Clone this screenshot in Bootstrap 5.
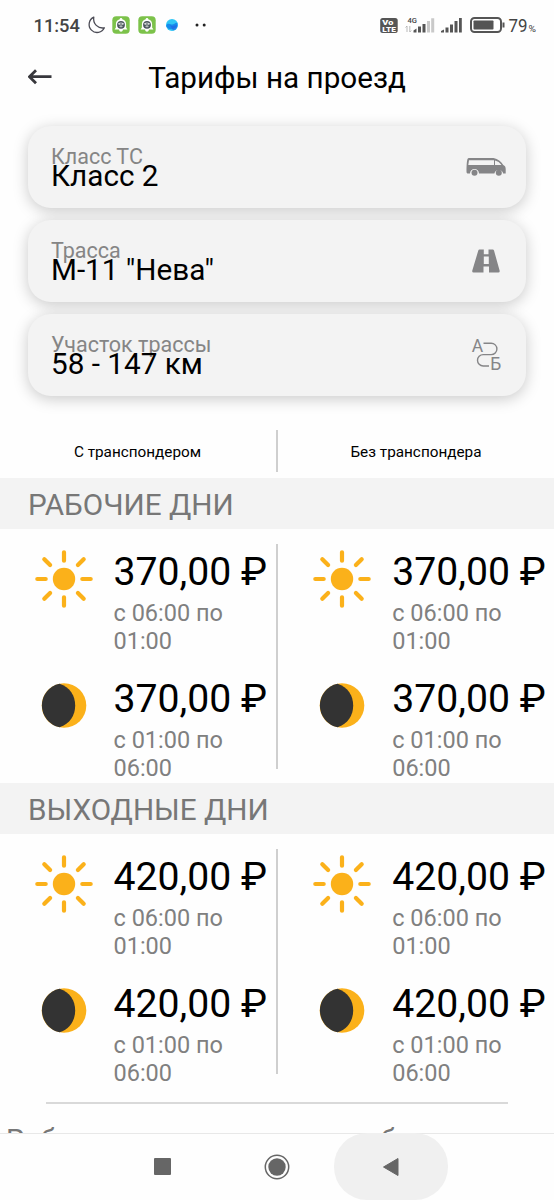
<!DOCTYPE html>
<html lang="ru">
<head>
<meta charset="utf-8">
<meta name="viewport" content="width=device-width, initial-scale=1">
<title>Тарифы на проезд</title>
<link href="https://cdn.jsdelivr.net/npm/bootstrap@5.3.0/dist/css/bootstrap.min.css" rel="stylesheet">
<style>
body{font-family:Roboto,sans-serif;background:#fefefe;color:#000;line-height:1.172;height:1200px;overflow:hidden}
svg{display:block;flex:none}
.statusbar{height:50px;padding-left:33.500px;padding-right:17px;color:#444}
.clock{font-size:18.3px;font-weight:500;width:46.500px;padding-top:2px}
.titlebar{height:76px;padding:17px 0 0 28px}
.screen-title{font-size:29.65px;position:absolute;left:0;right:0;top:10px;text-align:center}
.fields{padding:0 28px;gap:12px}
.field{height:82px;border-radius:23px;background:#f3f3f3;padding:19px 20px 0 23px;box-shadow:0 3px 15px rgba(0,0,0,.21)}
.field-label{font-size:21.5px;line-height:24px;color:#858585}
.field-value{font-size:29.7px;line-height:34px;margin-top:-10px}
.field svg{margin-top:-5px}
.col-heads{height:82px;padding-top:34px}
.col-heads .half{height:42px;font-size:15.3px;padding-top:3px}
.vline{width:2px;background:#cfcfcf;flex:none}
.half{width:276px;flex:none}
.half:first-child{padding-right:1px}
.band{height:51px;background:#f3f3f3;color:#777;font-size:29.7px;line-height:53px;padding-left:28px}
.rates{height:254px}
.rates .vline{height:225px;margin-top:15px}
.rate{height:127px;padding-top:20px;padding-left:34px}
.rate svg{margin-right:19.500px}
.vline + .half .rate svg{margin-right:20.200px}
.price{font-size:39.2px;line-height:47px;white-space:nowrap}
.hours{font-size:23.5px;line-height:27.5px;color:#808080;margin-top:4px;width:130px}
.endline{height:2px;background:#d9d9d9;margin:14px 46px 0}
.note{height:29px;overflow:hidden;padding:19px 0 0 6px;font-size:29px;line-height:34px;color:#777;white-space:nowrap;word-spacing:.5px}
.sysnav{height:68px;border-top:1px solid #e8e8e8;padding-left:154px;padding-bottom:2px}
.back-pill{width:114px;height:67px;border-radius:33px;background:#f0f0f0}
</style>
</head>
<body>
<svg width="0" height="0" class="position-absolute">
<defs>
<symbol id="sun" viewBox="0 0 60 60"><circle cx="30" cy="30" r="11.2" fill="#fbb11a"/><g stroke="#fbb11a" stroke-width="4.2" stroke-linecap="round"><path d="M30 3.3v8.4M30 48.3v8.4M3.3 30h8.4M48.3 30h8.4M10.300 10.300l5.800 5.800M43.900 43.900l5.800 5.800M49.700 10.300l-5.800 5.800M16.100 43.900l-5.800 5.800"/></g></symbol>
<symbol id="night" viewBox="0 0 60 60"><circle cx="30" cy="29.500" r="22.300" fill="#fbb11a"/><path d="M25.500 7.700A22.300 22.300 0 0 0 25.500 51.300C36 48 41.200 39 41.200 29.500S36 11 25.500 7.700z" fill="#333"/></symbol>
<symbol id="appicon" viewBox="0 0 18 18"><rect x=".3" y=".3" width="17.400" height="17.400" rx="4" fill="#7cc24a"/><path d="M9 1.900c.9 0 1.300.7 1.300 1.300 2.500.6 3.800 2.500 3.800 5v3.200l1.300 2.200H11c-.3 1.500-1 2.200-2 2.200s-1.700-.7-2-2.200H2.600l1.300-2.200V8.200c0-2.500 1.300-4.400 3.800-5C7.700 2.600 8.100 1.900 9 1.900z" fill="#fff"/><circle cx="9" cy="8.800" r="3.900" fill="#4a555c"/><path d="M6.700 7.300h1.300v1H6.700zM10 7.300h1.300v1H10zM7.300 10.300h3.400M9 6v5.500" stroke="#dde3e0" stroke-width=".7" fill="#fff"/></symbol>
</defs>
</svg>

<header class="statusbar d-flex align-items-center">
  <span class="clock">11:54</span>
  <svg width="20" height="20" viewBox="0 0 20 20" style="margin-left:7px"><path d="M6.800 2.200a8 8 0 1 0 10.600 10.600A9 9 0 0 1 6.800 2.200z" fill="none" stroke="#4b4b55" stroke-width="1.300" stroke-linejoin="round"/></svg>
  <svg width="18" height="18" style="margin-left:5px"><use href="#appicon"/></svg>
  <svg width="18" height="18" style="margin-left:8px"><use href="#appicon"/></svg>
  <svg width="12" height="12" viewBox="0 0 12 12" style="margin-left:10px"><circle cx="6" cy="6" r="6" fill="#30c7f5"/><path d="M.1 7C1 3.500 3.500 5 5.500 5.500S9 3.500 11.400 3.800A6 6 0 0 1 .1 7z" fill="#168bec"/><path d="M4 6c2 1.500 4 1.200 7.500-.5A6 6 0 0 1 7 11.500z" fill="#2165e5" opacity=".7"/></svg>
  <svg width="12" height="4" viewBox="0 0 12 4" style="margin-left:17px"><circle cx="2" cy="2" r="1.500" fill="#222"/><circle cx="9.200" cy="2" r="1.500" fill="#222"/></svg>
  <svg width="160" height="20" viewBox="0 0 160 20" class="ms-auto" font-family="Roboto,sans-serif">
    <rect x="3.200" y="3" width="17.500" height="15" rx="2.500" fill="#555"/>
    <g fill="#fff" font-weight="900" font-size="7.500"><text x="5.300" y="10.200" textLength="11" lengthAdjust="spacingAndGlyphs">Vo</text><text x="5.300" y="16.700" font-size="7.800" textLength="13.500" lengthAdjust="spacingAndGlyphs">LTE</text></g>
    <text x="30.500" y="7.500" font-size="7.600" font-weight="500" fill="#444">4G</text>
    <path d="M30 17v-6m-1.500 1.500L30 11m2.800 0v6m1.500-1.500L32.800 17" stroke="#aaa" stroke-width=".8" fill="none"/>
    <g fill="#555"><path d="M36.500 15.500l3-2v4h-3zM41 11.500h3v6h-3zM45.500 9h3v8.500h-3z"/><path d="M50 6h3v11.500h-3zM54.200 3.200h3v14.300h-3z" fill="#c9c9c9"/>
    <path d="M64 16l3-1.500v3h-3zM68.500 12.500h3v5h-3zM73 9.500h3v8h-3zM77.500 6h3v11.500h-3zM82 3h2.800v14.500H82z"/></g>
    <rect x="94" y="3" width="30" height="14" rx="3.500" fill="#fff" stroke="#555" stroke-width="2"/><rect x="96.500" y="5.500" width="20" height="9" rx=".8" fill="#555"/><path d="M126.500 7.500v5" stroke="#555" stroke-width="2"/>
    <text x="131.500" y="16.700" font-size="17.500" fill="#444" textLength="19" lengthAdjust="spacingAndGlyphs">79</text><text x="151.500" y="16.700" font-size="9.500" fill="#444" textLength="7.500" lengthAdjust="spacingAndGlyphs">%</text>
  </svg>
</header>

<div class="titlebar position-relative">
  <svg width="26" height="20" viewBox="0 0 26 20"><path d="M23.500 9.700H2M8 3.200L1.500 9.700 8 16.200" fill="none" stroke="#37373c" stroke-width="2.800"/></svg>
  <h1 class="screen-title fw-normal mb-0">Тарифы на проезд</h1>
</div>

<main>
  <div class="fields d-flex flex-column">
    <div class="field d-flex justify-content-between">
      <div><div class="field-label">Класс ТС</div><div class="field-value">Класс 2</div></div>
      <svg width="40" height="56" viewBox="0 0 40 56"><path d="M3 18h24.500c4.500 1 7.500 3.500 9.800 7 1.700.8 2.400 2 2.400 4v4.500h-2.500a4.500 4.500 0 0 0-8.800 0H13a4.500 4.500 0 0 0-9 0H2c-1 0-1.500-.7-1.500-1.800C.5 26 .8 21 1.500 19c.3-.7.8-1 1.500-1zM3 20.200L2.300 25H28v-4.800zM29 20.500V25h6.500c-1.600-2.300-3.800-3.900-6.500-4.500z" fill="#858587" fill-rule="evenodd"/><circle cx="8.500" cy="32.800" r="3" fill="#858587"/><circle cx="32.800" cy="32.800" r="3" fill="#858587"/></svg>
    </div>
    <div class="field d-flex justify-content-between">
      <div><div class="field-label">Трасса</div><div class="field-value">М-11 "Нева"</div></div>
      <svg width="40" height="56" viewBox="0 0 40 56"><path d="M13.500 15.500H17.800V20.200H22.500V15.500h4.200q1 0 1.300 1l5.600 20q.5 2-1.300 2H23V32.500H17.500v6H7.500q-1.700 0-1.200-2l6-20q.3-1 1.200-1zM17.800 22.500V30h5v-7.500z" fill="#858587" fill-rule="evenodd"/></svg>
    </div>
    <div class="field d-flex justify-content-between">
      <div><div class="field-label">Участок трассы</div><div class="field-value">58 - 147 км</div></div>
      <svg width="40" height="56" viewBox="0 0 40 56"><g fill="#858587" font-family="Roboto,sans-serif" font-size="17.500"><text x="5.800" y="23.800" textLength="11.500">А</text><text x="24.300" y="42">Б</text></g><path d="M17.500 15.200h7.700a5.700 5.700 0 0 1 0 11.400h-8a5.700 5.700 0 0 0 0 11.400H23" fill="none" stroke="#858587" stroke-width="1.400"/></svg>
    </div>
  </div>

  <div class="col-heads d-flex">
    <div class="half d-flex align-items-center justify-content-center">С транспондером</div>
    <div class="vline" style="height:42px"></div>
    <div class="half d-flex align-items-center justify-content-center">Без транспондера</div>
  </div>

  <section>
    <h2 class="band fw-normal mb-0">РАБОЧИЕ ДНИ</h2>
    <div class="rates d-flex">
      <div class="half">
        <div class="rate d-flex"><svg width="60" height="60"><use href="#sun"/></svg><div><div class="price">370,00 ₽</div><div class="hours">с 06:00 по 01:00</div></div></div>
        <div class="rate d-flex"><svg width="60" height="60"><use href="#night"/></svg><div><div class="price">370,00 ₽</div><div class="hours">с 01:00 по 06:00</div></div></div>
      </div>
      <div class="vline"></div>
      <div class="half">
        <div class="rate d-flex"><svg width="60" height="60"><use href="#sun"/></svg><div><div class="price">370,00 ₽</div><div class="hours">с 06:00 по 01:00</div></div></div>
        <div class="rate d-flex"><svg width="60" height="60"><use href="#night"/></svg><div><div class="price">370,00 ₽</div><div class="hours">с 01:00 по 06:00</div></div></div>
      </div>
    </div>
  </section>

  <section>
    <h2 class="band fw-normal mb-0">ВЫХОДНЫЕ ДНИ</h2>
    <div class="rates d-flex">
      <div class="half">
        <div class="rate d-flex"><svg width="60" height="60"><use href="#sun"/></svg><div><div class="price">420,00 ₽</div><div class="hours">с 06:00 по 01:00</div></div></div>
        <div class="rate d-flex"><svg width="60" height="60"><use href="#night"/></svg><div><div class="price">420,00 ₽</div><div class="hours">с 01:00 по 06:00</div></div></div>
      </div>
      <div class="vline"></div>
      <div class="half">
        <div class="rate d-flex"><svg width="60" height="60"><use href="#sun"/></svg><div><div class="price">420,00 ₽</div><div class="hours">с 06:00 по 01:00</div></div></div>
        <div class="rate d-flex"><svg width="60" height="60"><use href="#night"/></svg><div><div class="price">420,00 ₽</div><div class="hours">с 01:00 по 06:00</div></div></div>
      </div>
    </div>
  </section>
  <div class="endline"></div>
  <div class="note">Рабочие дни понедельник, будни</div>
</main>

<nav class="sysnav d-flex align-items-center">
  <svg width="17" height="17" viewBox="0 0 17 17"><rect width="17" height="17" rx="1" fill="#666"/></svg>
  <svg width="26" height="26" viewBox="0 0 26 26" style="margin-left:93px"><circle cx="13" cy="13" r="11.700" fill="none" stroke="#666" stroke-width="1.500"/><circle cx="13" cy="13" r="8.700" fill="#666"/></svg>
  <div class="back-pill d-flex align-items-center justify-content-center" style="margin-left:44px"><svg width="18" height="20" viewBox="0 0 18 20"><path d="M1.500 10L16 1.500v17z" fill="#666" stroke="#666" stroke-linejoin="round"/></svg></div>
</nav>
<script src="https://cdn.jsdelivr.net/npm/bootstrap@5.3.0/dist/js/bootstrap.bundle.min.js"></script>
</body>
</html>
